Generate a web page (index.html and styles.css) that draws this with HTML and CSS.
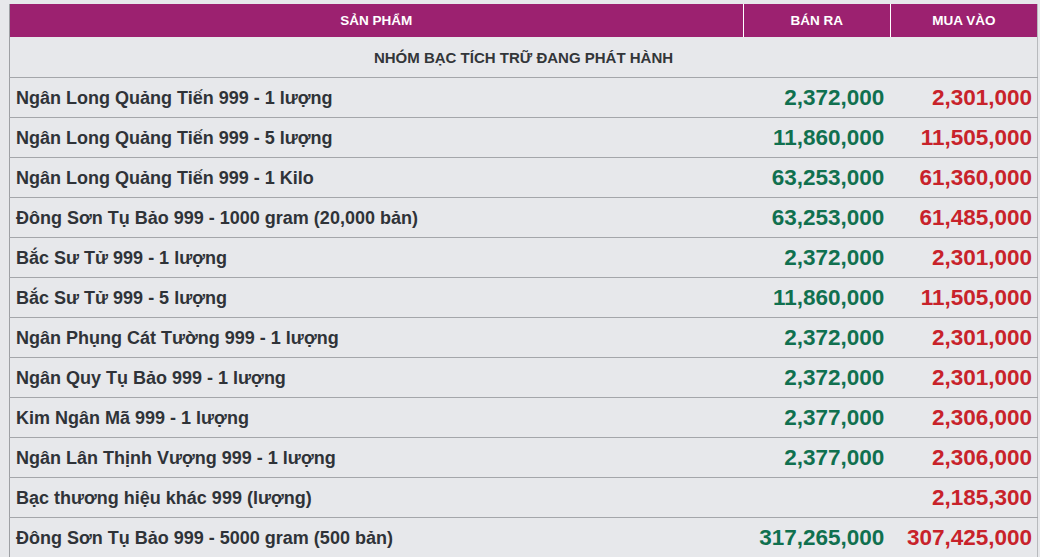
FILE: index.html
```html
<!DOCTYPE html>
<html lang="vi">
<head>
<meta charset="utf-8">
<title>Giá bạc</title>
<link rel="stylesheet" href="styles.css">
</head>
<body>
<table class="price-table">
  <thead>
    <tr>
      <th class="col-name">SẢN PHẨM</th>
      <th class="col-price">BÁN RA</th>
      <th class="col-price">MUA VÀO</th>
    </tr>
  </thead>
  <tbody>
    <tr class="group"><td colspan="3">NHÓM BẠC TÍCH TRỮ ĐANG PHÁT HÀNH</td></tr>
    <tr><td class="name">Ngân Long Quảng Tiến 999 - 1 lượng</td><td class="sell">2,372,000</td><td class="buy">2,301,000</td></tr>
    <tr><td class="name">Ngân Long Quảng Tiến 999 - 5 lượng</td><td class="sell">11,860,000</td><td class="buy">11,505,000</td></tr>
    <tr><td class="name">Ngân Long Quảng Tiến 999 - 1 Kilo</td><td class="sell">63,253,000</td><td class="buy">61,360,000</td></tr>
    <tr><td class="name">Đông Sơn Tụ Bảo 999 - 1000 gram (20,000 bản)</td><td class="sell">63,253,000</td><td class="buy">61,485,000</td></tr>
    <tr><td class="name">Bắc Sư Tử 999 - 1 lượng</td><td class="sell">2,372,000</td><td class="buy">2,301,000</td></tr>
    <tr><td class="name">Bắc Sư Tử 999 - 5 lượng</td><td class="sell">11,860,000</td><td class="buy">11,505,000</td></tr>
    <tr><td class="name">Ngân Phụng Cát Tường 999 - 1 lượng</td><td class="sell">2,372,000</td><td class="buy">2,301,000</td></tr>
    <tr><td class="name">Ngân Quy Tụ Bảo 999 - 1 lượng</td><td class="sell">2,372,000</td><td class="buy">2,301,000</td></tr>
    <tr><td class="name">Kim Ngân Mã 999 - 1 lượng</td><td class="sell">2,377,000</td><td class="buy">2,306,000</td></tr>
    <tr><td class="name">Ngân Lân Thịnh Vượng 999 - 1 lượng</td><td class="sell">2,377,000</td><td class="buy">2,306,000</td></tr>
    <tr><td class="name">Bạc thương hiệu khác 999 (lượng)</td><td class="sell"></td><td class="buy">2,185,300</td></tr>
    <tr><td class="name">Đông Sơn Tụ Bảo 999 - 5000 gram (500 bản)</td><td class="sell">317,265,000</td><td class="buy">307,425,000</td></tr>
  </tbody>
</table>
</body>
</html>
```

FILE: styles.css
```css
html, body {
  margin: 0;
  padding: 0;
  background: #e7e8eb;
  font-family: "Liberation Sans", Arial, sans-serif;
}

body {
  padding: 4px 2px 0 9px;
}

.price-table {
  width: 1029px;
  border-collapse: collapse;
  table-layout: fixed;
  background: #e7e8eb;
  border-left: 1px solid #9ea0a4;
  border-right: 1px solid #b8babd;
}

.price-table th {
  background: #9c2170;
  color: #ffffff;
  font-size: 13.5px;
  font-weight: bold;
  height: 33px;
  padding: 0;
  text-align: center;
  border-left: 1px solid #ffffff;
  box-sizing: border-box;
}

.price-table th:first-child {
  border-left: none;
}

.col-name {
  width: 733px;
}

.col-price {
  width: 147px;
}

.price-table td {
  height: 40px;
  padding: 2px 6px 0;
  box-sizing: border-box;
  border-bottom: 1px solid #a4a6aa;
  white-space: nowrap;
}

.group td {
  text-align: center;
  font-size: 15px;
  font-weight: bold;
  color: #333639;
}

.name {
  font-size: 18px;
  font-weight: bold;
  color: #2f3338;
}

.sell,
.buy {
  text-align: right;
  font-size: 22.5px;
  font-weight: bold;
}

.sell {
  color: #10704f;
}

.price-table .buy {
  color: #c8222a;
  padding-right: 5px;
}
```
